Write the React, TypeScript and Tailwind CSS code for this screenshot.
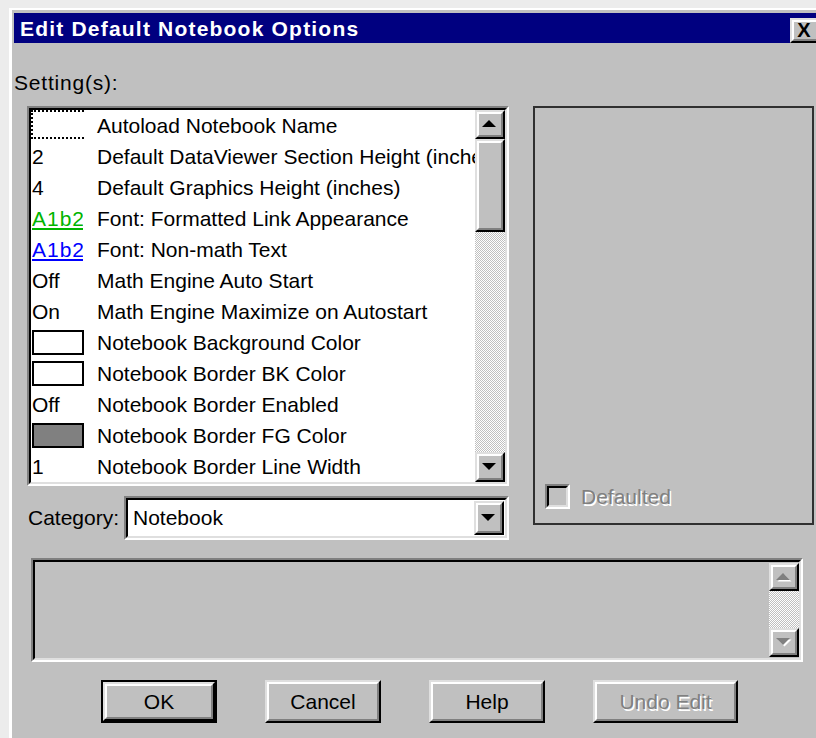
import type { ReactNode } from "react";

type Row = { value: string; label: string };

const rows: Row[] = [
    { value: "focus", label: "Autoload Notebook Name" },
    { value: "2", label: "Default DataViewer Section Height (inches)" },
    { value: "4", label: "Default Graphics Height (inches)" },
    { value: "green", label: "Font: Formatted Link Appearance" },
    { value: "blue", label: "Font: Non-math Text" },
    { value: "Off", label: "Math Engine Auto Start" },
    { value: "On", label: "Math Engine Maximize on Autostart" },
    { value: "white", label: "Notebook Background Color" },
    { value: "white", label: "Notebook Border BK Color" },
    { value: "Off", label: "Notebook Border Enabled" },
    { value: "gray", label: "Notebook Border FG Color" },
    { value: "1", label: "Notebook Border Line Width" },
]

const Arrow = ({ dir, disabled }: { dir: "up" | "down"; disabled?: boolean }) => {
    const d = dir === "up" ? "M7 0 L14 7 L0 7 Z" : "M0 0 L14 0 L7 7 Z"
    return (
        <svg width="16" height="9" viewBox="0 0 16 9">
            {disabled && <path d={d} fill="#ffffff" transform="translate(1.5 1.5)" />}
            <path d={d} fill={disabled ? "#808080" : "#000000"} />
        </svg>
    )
}

// raised 3d bevel used by buttons and scroll arrows
const Raised = ({ className, children }: { className?: string; children?: ReactNode }) => (
    <div className={`border-t-2 border-l-2 border-r-2 border-b-2 border-t-[#dfdfdf] border-l-[#dfdfdf] border-r-black border-b-black bg-[#c0c0c0] ${className ?? ""}`}>
        <div className="w-full h-full border-t-2 border-l-2 border-r-2 border-b-2 border-t-white border-l-white border-r-[#808080] border-b-[#808080] flex items-center justify-center">
            {children}
        </div>
    </div>
)

// sunken 3d well for list, combo and text areas
const Sunken = ({ className, inner, children }: { className?: string; inner?: string; children?: ReactNode }) => (
    <div className={`border-t-2 border-l-2 border-r-2 border-b-2 border-t-[#808080] border-l-[#808080] border-r-white border-b-white ${className ?? ""}`}>
        <div className={`w-full h-full border-t-2 border-l-2 border-r-2 border-b-2 border-t-black border-l-black border-r-[#dfdfdf] border-b-[#dfdfdf] ${inner ?? ""}`}>
            {children}
        </div>
    </div>
)

const Track = ({ className }: { className?: string }) => (
    <div className={`bg-[repeating-conic-gradient(#c0c0c0_0_25%,#ffffff_0_50%)] bg-[length:2px_2px] ${className ?? ""}`} />
)

const ValueCell = ({ value }: { value: string }) => {
    if (value === "focus") {
        return <div className="w-[53px] h-[29px] -mt-[2px] -ml-[1px] border-t-2 border-l-2 border-b-2 border-dotted border-black" />
    }
    if (value === "green" || value === "blue") {
        return (
            <div className={`w-[51px] overflow-hidden whitespace-nowrap underline tracking-[1px] ${value === "green" ? "text-[#00b400]" : "text-[#0000ff]"}`}>
                A1b2
            </div>
        )
    }
    if (value === "white" || value === "gray") {
        return <div className={`w-[52px] h-[25px] border-2 border-black ${value === "gray" ? "bg-[#808080]" : "bg-white"}`} />
    }
    return <span>{value}</span>
}

const Button = ({ label, wide, isDefault, disabled }: { label: string; wide?: boolean; isDefault?: boolean; disabled?: boolean }) => {
    const text = (
        <span className={disabled ? "text-[#808080] [text-shadow:1.5px_1.5px_0_#ffffff]" : "text-black"}>{label}</span>
    )
    if (isDefault) {
        return (
            <div className={`${wide ? "w-[145px]" : "w-[116px]"} h-[43px] border-2 border-black`}>
                <Raised className="w-full h-full">{text}</Raised>
            </div>
        )
    }
    return <Raised className={`${wide ? "w-[145px]" : "w-[116px]"} h-[43px]`}>{text}</Raised>
}

const App = () => {
    return (
        <div className="w-[816px] h-[738px] overflow-hidden bg-[#ececec] pl-[9px] pt-[8px] font-['Liberation_Sans',Arial,sans-serif] text-[21px] text-black">
            <div className="h-[740px] w-[830px] border-l-[3px] border-t-2 border-white bg-[#c0c0c0] pl-[2px] pt-[3px]">
                {/* title bar */}
                <div className="h-[30px] w-[806px] bg-[#000080] flex items-center justify-between pl-[6px]">
                    <span className="text-white font-bold text-[21px] tracking-[1.2px] leading-none">Edit Default Notebook Options</span>
                    <Raised className="w-[30px] h-[25px] mt-[5px]">
                        <span className="text-[20px] font-bold leading-none -mt-[1px] -ml-[2px]">X</span>
                    </Raised>
                </div>

                <div className="flex flex-col">
                    <div className="mt-[28px] h-[24px] leading-[24px] tracking-[0.8px]">Setting(s):</div>

                    <div className="mt-[11px] flex items-start">
                        <div className="ml-[13px] w-[482px] flex flex-col">
                            {/* settings list */}
                            <Sunken className="w-[482px] h-[380px]" inner="bg-white flex">
                                <div className="w-[444px] overflow-hidden">
                                    {rows.map((row, i) => (
                                        <div key={i} className="h-[31px] flex items-center whitespace-nowrap">
                                            <div className="w-[66px] shrink-0 pl-[1px] flex items-center">
                                                <ValueCell value={row.value} />
                                            </div>
                                            <span>{row.label}</span>
                                        </div>
                                    ))}
                                </div>
                                <div className="w-[30px] shrink-0 flex flex-col">
                                    <Raised className="h-[29px]"><Arrow dir="up" /></Raised>
                                    <Raised className="h-[93px]" />
                                    <Track className="flex-1" />
                                    <Raised className="h-[30px]"><Arrow dir="down" /></Raised>
                                </div>
                            </Sunken>

                            <div className="mt-[10px] h-[44px] flex items-center">
                                <span className="ml-[1px]">Category:</span>
                                <Sunken className="ml-auto w-[385px] h-[44px]" inner="bg-white flex items-center">
                                    <span className="flex-1 pl-[5px]">Notebook</span>
                                    <Raised className="w-[30px] h-[34px] mr-[1px]"><Arrow dir="down" /></Raised>
                                </Sunken>
                            </div>
                        </div>

                        {/* value editor panel */}
                        <div className="ml-[24px] w-[281px] h-[419px] border-2 border-[#303030] flex flex-col justify-end pb-[11px] pl-[10px]">
                            <div className="flex items-center">
                                <Sunken className="w-[25px] h-[25px]" inner="bg-[#c0c0c0]" />
                                <span className="ml-[11px] text-[#808080] [text-shadow:1.5px_1.5px_0_#ffffff]">Defaulted</span>
                            </div>
                        </div>
                    </div>

                    {/* description area */}
                    <Sunken className="mt-[18px] ml-[17px] w-[772px] h-[104px]" inner="bg-[#c0c0c0] flex justify-end pt-[1px] pb-[1px]">
                        <div className="w-[30px] flex flex-col">
                            <Raised className="h-[28px]"><Arrow dir="up" disabled /></Raised>
                            <Track className="flex-1" />
                            <Raised className="h-[29px]"><Arrow dir="down" disabled /></Raised>
                        </div>
                    </Sunken>

                    <div className="mt-[18px] ml-[87px] flex gap-[48px]">
                        <Button label="OK" isDefault />
                        <Button label="Cancel" />
                        <Button label="Help" />
                        <Button label="Undo Edit" wide disabled />
                    </div>
                </div>
            </div>
        </div>
    )
}

export default App
